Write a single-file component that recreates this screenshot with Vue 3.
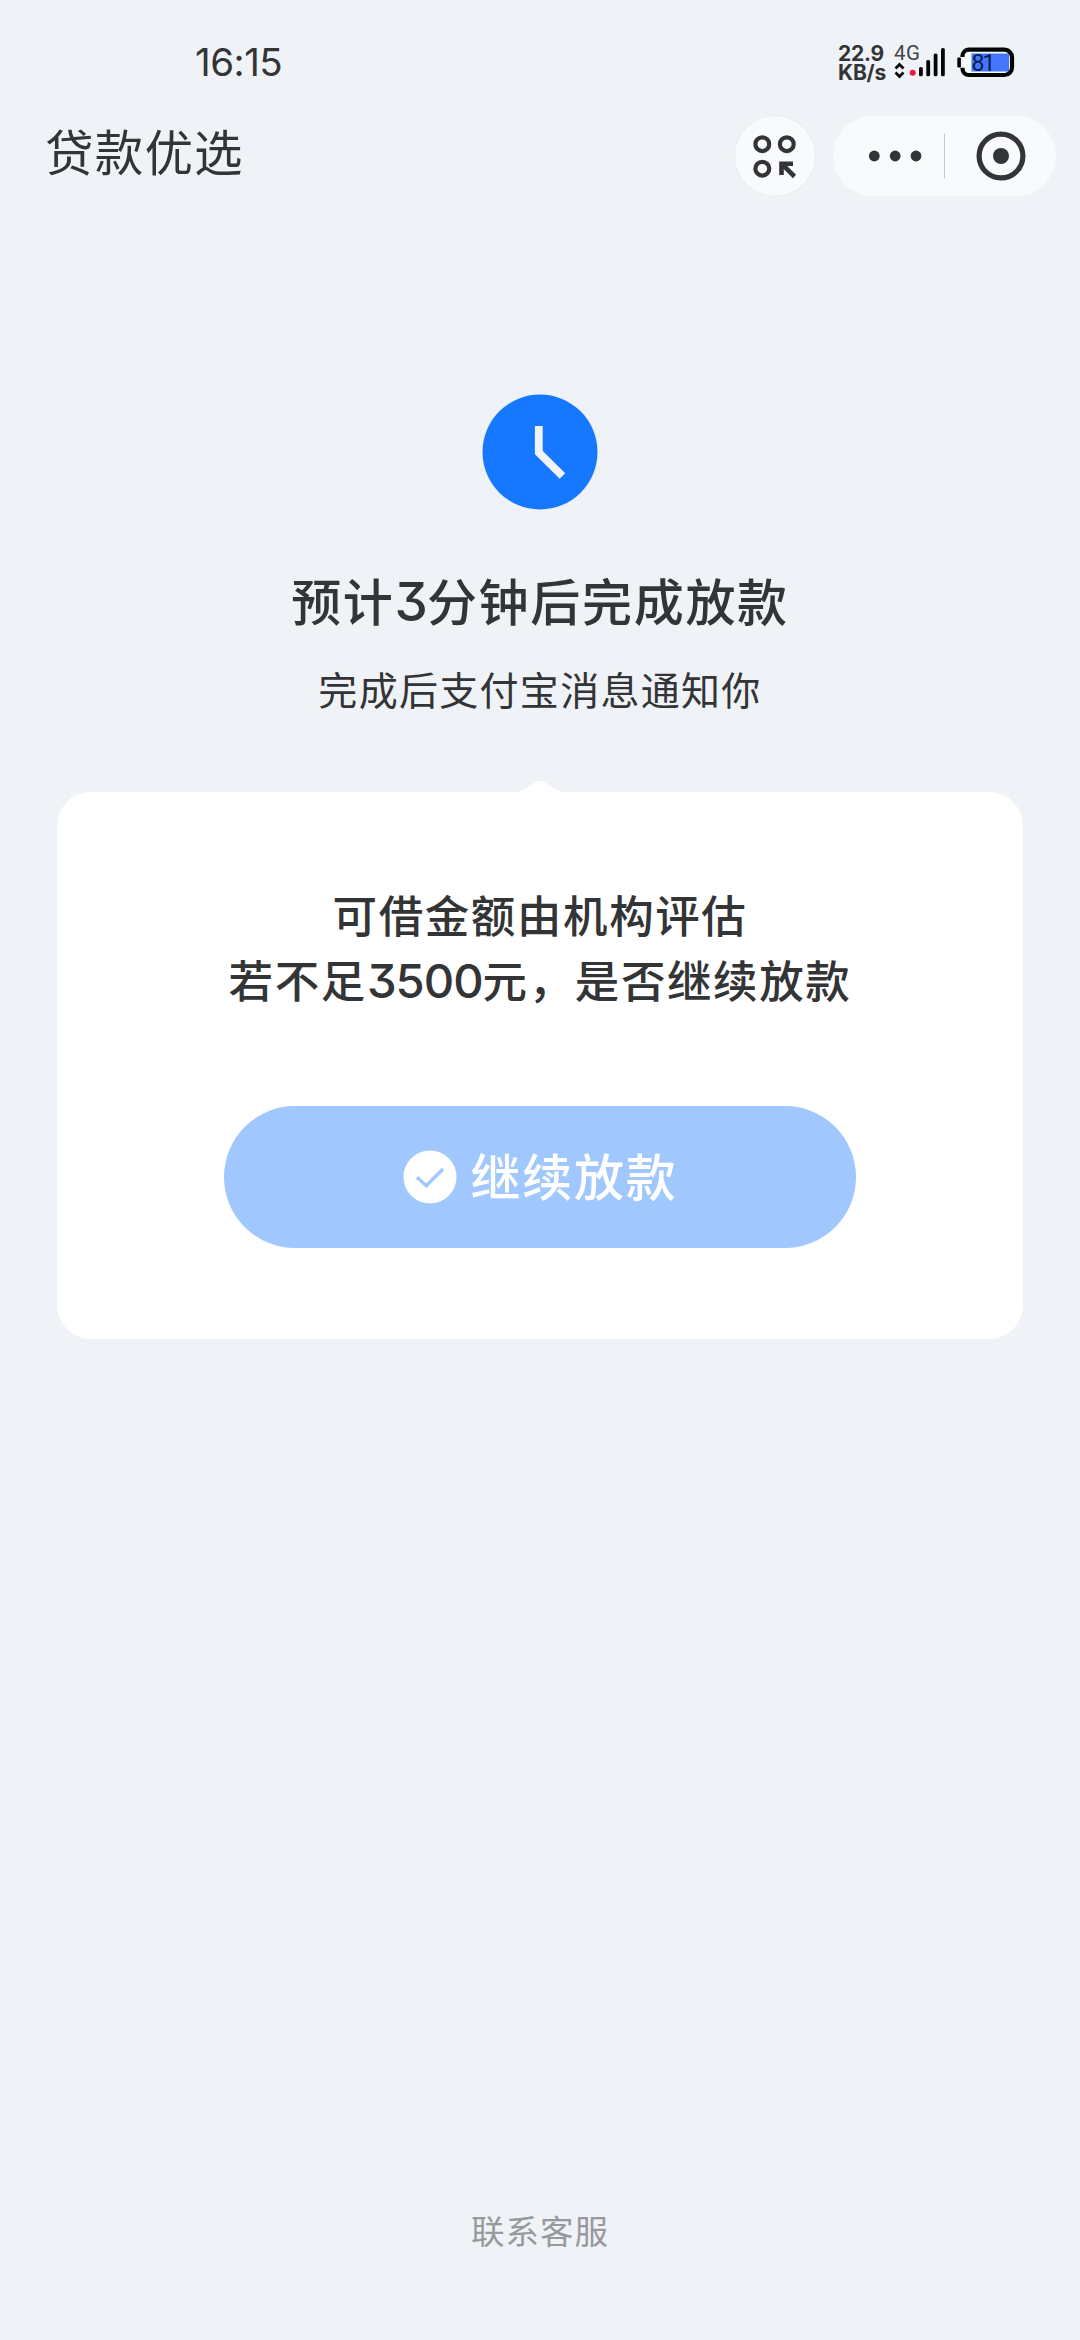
<script setup>
const cardLine = { before: '若不足', amount: '3500', after: '元，是否继续放款' }
const signalBars = [
  { x: 919, y: 67 },
  { x: 926.3, y: 60 },
  { x: 933.7, y: 53.5 },
  { x: 941, y: 48 }
]
</script>

<template>
  <div class="page">
    <header class="status">
      <time class="clock-text">16:15</time>
      <div class="speed"><span>22.9</span><span>KB/s</span></div>
      <svg class="signal" viewBox="892 40 56 44" width="56" height="44">
        <text x="894" y="59.8" class="net" textLength="26">4G</text>
        <path d="M895.500 68.500l4-4 4 4M895.500 72.500l4 4 4-4" fill="none" stroke="#0b0b0c" stroke-width="2.800" />
        <circle cx="912.7" cy="72.8" r="3" fill="#f0183c" />
        <rect v-for="b in signalBars" :key="b.x" :x="b.x" :y="b.y" width="3.8" :height="76.3 - b.y" rx="1.6" fill="#050506" />
      </svg>
      <svg class="battery" viewBox="955 44 62 36" width="62" height="36">
        <rect x="963" y="51" width="48" height="23" rx="5" fill="#f6f9fd" />
        <rect x="971.5" y="53.5" width="37.500" height="18" fill="#4376fa" />
        <path d="M962.500 57v-1a6.500 6.500 0 0 1 6.500-6.300h35.500a7.500 7.500 0 0 1 7.500 7.500v10.300a7.500 7.500 0 0 1-7.500 7.500H969a6.500 6.500 0 0 1-6.500-6.300v-1" fill="none" stroke="#050506" stroke-width="4.200" />
        <rect x="957.300" y="57.500" width="3.600" height="10" rx="1" fill="#050506" />
        <text x="971.500" y="71" class="level" textLength="24">81</text>
      </svg>
    </header>

    <nav class="nav">
      <h1 class="app-title">贷款优选</h1>
      <button class="round" aria-label="小程序">
        <svg viewBox="0 0 48 48" width="48" height="48" fill="none" stroke="#333436" stroke-width="4.200">
          <circle cx="11.300" cy="12.200" r="6.900" />
          <circle cx="35.800" cy="12.200" r="6.900" />
          <circle cx="11.300" cy="36.700" r="6.900" />
          <path d="M30.500 43V31.700H42M31 32.200L43.500 44.500" stroke-width="4.600" />
        </svg>
      </button>
      <div class="capsule">
        <svg class="dots" viewBox="0 0 54 12" width="54" height="12" fill="#333436">
          <circle cx="6.300" cy="6" r="5.400" />
          <circle cx="27.200" cy="6" r="5.400" />
          <circle cx="48" cy="6" r="5.400" />
        </svg>
        <i class="divider"></i>
        <svg class="target" viewBox="0 0 50 50" width="50" height="50">
          <circle cx="25" cy="25" r="21.900" fill="none" stroke="#333436" stroke-width="5.200" />
          <circle cx="25" cy="25" r="8" fill="#333436" />
        </svg>
      </div>
    </nav>

    <main class="content">
      <svg class="clock" viewBox="0 0 116 116" width="116" height="116">
        <circle cx="58" cy="58" r="57.500" fill="#1677ff" />
        <path d="M56.800 32v26.500L80.500 82" fill="none" stroke="#f0f3f8" stroke-width="7.800" />
      </svg>
      <h2 class="headline">预计<span class="num">3</span>分钟后完成放款</h2>
      <p class="sub">完成后支付宝消息通知你</p>
      <section class="card">
        <svg class="tip" viewBox="0 0 52 13" width="52" height="13">
          <path d="M0 13Q6 12 11 9L21 2.500Q26-1 31 2.500L41 9Q46 12 52 13z" fill="#fff" />
        </svg>
        <p class="question">可借金额由机构评估</p>
        <p class="question">{{ cardLine.before }}<span class="num">{{ cardLine.amount }}</span>{{ cardLine.after }}</p>
        <button class="action">
          <svg viewBox="0 0 54 54" width="54" height="54">
            <circle cx="27" cy="27" r="26.500" fill="#fff" />
            <path d="M14 27.300l9.300 8.400L40 19" fill="none" stroke="#a1c7ff" stroke-width="3.400" />
          </svg>
          <span class="action-label">继续放款</span>
        </button>
      </section>
    </main>

    <footer class="service">联系客服</footer>
  </div>
</template>

<style>
body {
  margin: 0;
  background: #eff3f8;
}
</style>

<style scoped>
.page {
  box-sizing: border-box;
  width: 1080px;
  height: 2340px;
  display: flex;
  flex-direction: column;
  background: #eff3f8;
  color: #333436;
  font-family: "Noto Sans CJK SC", sans-serif;
  overflow: hidden;
}
h1, h2, p { margin: 0; font-weight: 400; }
button { border: 0; padding: 0; font: inherit; }
svg { display: block; flex: none; }
.status {
  height: 108px;
  display: flex;
  align-items: flex-start;
  padding-left: 195px;
}
.clock-text {
  width: 643px;
  margin-top: 38px;
  font: 400 38.500px/48px Inter, sans-serif;
  letter-spacing: -.5px;
}
.speed {
  width: 54px;
  margin-top: 44px;
  display: flex;
  flex-direction: column;
  font: 700 21px/19px Inter, sans-serif;
  letter-spacing: -.2px;
}
.signal { margin-top: 40px; }
.battery { margin: 44px 0 0 7px; }
.net { font: 400 20.500px Roboto, sans-serif; fill: #444548; }
.level { font: 400 23px Roboto, sans-serif; fill: #0b1c50; }
.nav {
  height: 96px;
  display: flex;
  align-items: flex-start;
  padding-left: 45px;
}
.app-title {
  width: 690px;
  margin-top: 6px;
  font-size: 48.500px;
  line-height: 72px;
  letter-spacing: 1.200px;
}
.round {
  width: 80px;
  height: 80px;
  margin-top: 7.500px;
  border-radius: 50%;
  background: #f8fafb;
  box-shadow: 0 0 0 1px #e9edf2;
  display: grid;
  place-items: center;
  color: inherit;
}
.capsule {
  box-sizing: border-box;
  width: 223px;
  height: 80px;
  margin: 7.500px 0 0 18px;
  padding-left: 35px;
  border-radius: 40px;
  background: #f8fafb;
  display: flex;
  align-items: center;
}
.divider { width: 1px; height: 44px; margin: 0 31px 0 22px; background: #c6c8cb; }
.content {
  display: flex;
  flex-direction: column;
  align-items: center;
  padding-top: 190px;
}
.headline {
  margin-top: 51px;
  font-size: 50px;
  font-weight: 500;
  line-height: 76px;
  letter-spacing: 1.700px;
}
.num {
  font-family: Inter, sans-serif;
  font-feature-settings: "cv09";
  font-size: 1.060em;
  letter-spacing: -1px;
  line-height: 0;
}
.sub {
  margin-top: 21px;
  font-size: 39px;
  line-height: 60px;
  letter-spacing: 1.300px;
}
.card {
  position: relative;
  box-sizing: border-box;
  width: 966px;
  height: 547px;
  margin-top: 74px;
  padding-top: 89px;
  border-radius: 34px;
  background: #fff;
  display: flex;
  flex-direction: column;
  align-items: center;
}
.tip { position: absolute; top: -12px; left: 457px; }
.question {
  font-size: 44.500px;
  font-weight: 500;
  line-height: 65px;
  letter-spacing: 1.600px;
}
.action {
  width: 632px;
  height: 142px;
  margin-top: 95px;
  border-radius: 71px;
  background: #a1c7ff;
  color: #fff;
  display: flex;
  align-items: center;
  justify-content: center;
  gap: 14px;
  font-size: 50px;
  font-weight: 500;
  line-height: 76px;
  letter-spacing: 1.700px;
}
.action-label { padding-bottom: 6px; }
.service {
  margin-top: auto;
  padding-bottom: 84px;
  text-align: center;
  color: #97999d;
  font-size: 33.500px;
  line-height: 52px;
  letter-spacing: 1px;
}
</style>
